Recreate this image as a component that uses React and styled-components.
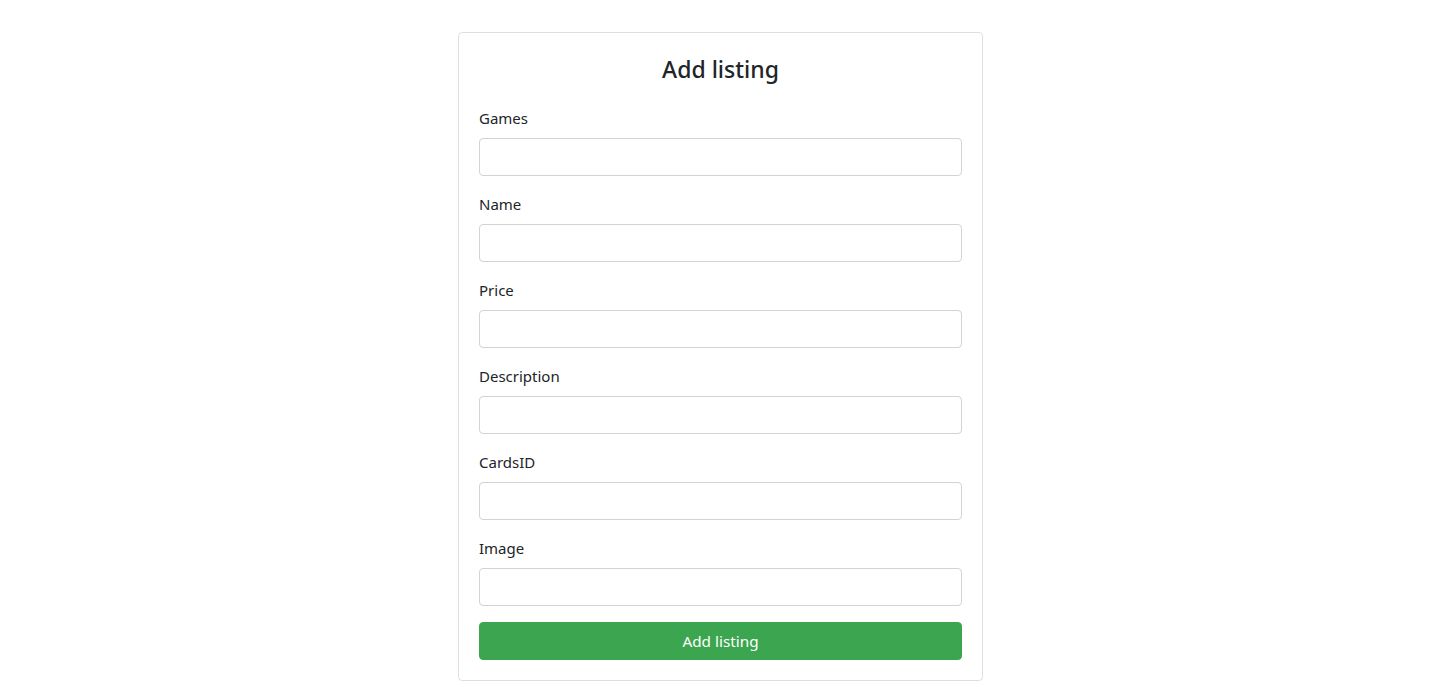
import React from "react";
import styled, { createGlobalStyle } from "styled-components";

const Global = createGlobalStyle`
  * { box-sizing: border-box; }
  body {
    margin: 0;
    background: #fff;
    color: #212529;
    font-family: "Noto Sans", "Open Sans", sans-serif;
  }
`;

const Page = styled.div`
  display: flex;
  justify-content: center;
  padding: 32px 0 0 4px;
`;

const Card = styled.form`
  width: 525px;
  border: 1px solid rgba(0, 0, 0, 0.125);
  border-radius: 4px;
  padding: 20px;
  display: flex;
  flex-direction: column;
`;

const Title = styled.h3`
  margin: 0 0 21px;
  font-size: 23px;
  line-height: 32px;
  font-weight: 500;
  text-align: center;
  color: #212529;
`;

const Group = styled.div`
  display: flex;
  flex-direction: column;
  margin-bottom: 16px;
`;

const Label = styled.label`
  font-size: 15px;
  line-height: 24px;
  margin-bottom: 8px;
  color: #212529;
`;

const Input = styled.input`
  height: 38px;
  width: 100%;
  border: 1px solid #ced4da;
  border-radius: 4px;
  padding: 6px 12px;
  font: inherit;
  font-size: 16px;
  color: #495057;
  outline: none;
`;

const Button = styled.button`
  height: 38px;
  width: 100%;
  border: 1px solid #3ca550;
  border-radius: 4px;
  background: #3ca550;
  color: #fff;
  font: inherit;
  font-size: 15.3px;
  cursor: pointer;
`;

const fields = ["Games", "Name", "Price", "Description", "CardsID", "Image"];

export default function App() {
  return (
    <>
      <Global />
      <Page>
        <Card onSubmit={(e) => e.preventDefault()}>
          <Title>Add listing</Title>
          {fields.map((f) => (
            <Group key={f}>
              <Label>{f}</Label>
              <Input type="text" />
            </Group>
          ))}
          <Button type="submit">Add listing</Button>
        </Card>
      </Page>
    </>
  );
}
